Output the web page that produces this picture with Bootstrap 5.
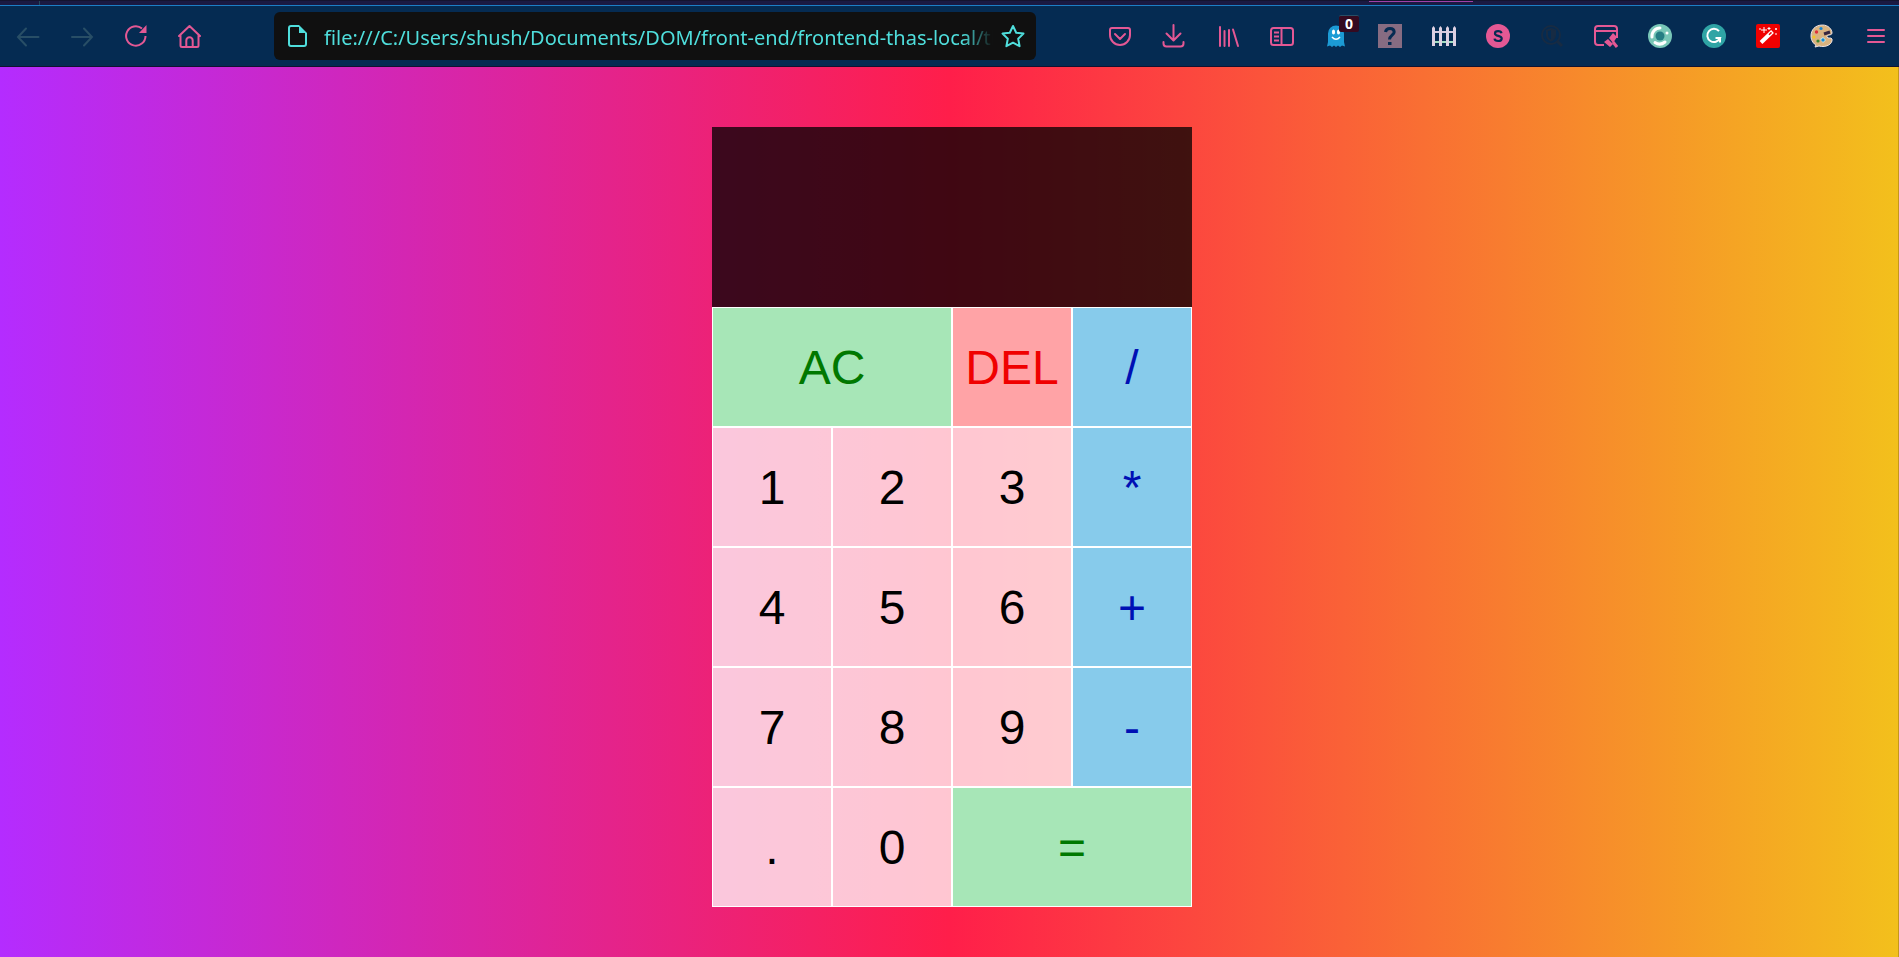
<!DOCTYPE html>
<html lang="en">
<head>
<meta charset="utf-8">
<meta name="viewport" content="width=device-width, initial-scale=1">
<title>Calculator</title>
<link href="https://cdn.jsdelivr.net/npm/bootstrap@5.3.0/dist/css/bootstrap.min.css" rel="stylesheet">
<style>
  body { font-family: "Liberation Sans", Arial, sans-serif; }

  .tab-strip { height: 6px; background: #1a1a42; border-top: 1px solid #14142f; border-bottom: 1px solid #1c7fc6; }
  .tab-edge { width: 40px; border-right: 1px solid #244a5e; }
  .tab-marker { width: 104px; height: 1px; margin-right: 426px; background: #a040a8; }

  .toolbar { height: 61px; background: #052b52; border-bottom: 1px solid #121231; }
  .tool { width: 24px; height: 24px; padding: 0; border: 0; background: none; color: #e45894; line-height: 0; flex: none; }
  .tool:disabled { color: #284e66; }
  .tool-nav { gap: 30px; padding-left: 16px; width: 274px; }
  .tool-ext { gap: 30px; padding-right: 11px; }
  .tool-badge { left: 15px; top: -9px; width: 20px; height: 17px; border-radius: 2px; background: #350a20; color: #fff; border-top: 1px solid #284e66;
    font: 700 14px/15px "Noto Sans", sans-serif; }

  .url-box { width: 762px; height: 48px; border-radius: 6px; background: #101010; color: #4fdedc; padding: 0 11px; }
  .url-box .tool { color: inherit; }
  .url-input { min-width: 0; height: 32px; border: 0; padding: 2px 0 0; margin-left: 15px; background: none; color: inherit; outline: 0;
    font-family: "Noto Sans", sans-serif; font-size: 20px; line-height: 30px;
    -webkit-mask-image: linear-gradient(to right, #000 0, #000 calc(100% - 30px), transparent 100%);
    mask-image: linear-gradient(to right, #000 0, #000 calc(100% - 30px), transparent 100%); }

  .stage { background: linear-gradient(to right, #b42cff, #ff1e4a, #f3c01c); padding: 60px 0 0 6px; border-right: 1px solid #c4981c; }
  .calc-grid { display: grid; grid-template-columns: repeat(4, 120px); grid-template-rows: 180px repeat(5, 120px); }
  .calc-display { grid-column: 1 / -1; background: rgba(0, 0, 0, .75); }
  .calc-key { border: 1px solid #fff; padding: 2px 0 0; background: rgba(255, 255, 255, .75); color: #000; font-size: 48px; line-height: 56px; }
  .key-wide { grid-column: span 2; }
  .key-go { background: #a7e6b7; color: #007800; }
  .key-del { background: #ffa3a6; color: #f00000; }
  .key-op { background: #87cbeb; color: #0010b4; }
</style>
<script src="https://cdn.jsdelivr.net/npm/bootstrap@5.3.0/dist/js/bootstrap.bundle.min.js"></script>
</head>
<body class="d-flex flex-column min-vh-100">
<header>
  <div class="tab-strip d-flex justify-content-between"><div class="tab-edge"></div><div class="tab-marker"></div></div>
  <nav class="toolbar d-flex align-items-center" aria-label="Browser toolbar">
    <div class="tool-nav d-flex flex-none">
      <button class="tool" type="button" disabled aria-label="Back"><svg width="24" height="24" fill="none" stroke="currentColor" stroke-width="2" stroke-linecap="round"><path d="M22.500 13H3M10 4.500L2 13l8 8.500"/></svg></button>
      <button class="tool" type="button" disabled aria-label="Forward"><svg width="24" height="24" fill="none" stroke="currentColor" stroke-width="2" stroke-linecap="round"><path d="M2 13H22M14 4.500l8 8.500-8 8.500"/></svg></button>
      <button class="tool" type="button" aria-label="Reload"><svg width="24" height="24" fill="none" stroke="currentColor" stroke-width="2"><path d="M21.500 12a9.700 9.700 0 1 1-3.500-7.500"/><path d="M22.500 1v8H15z" fill="currentColor" stroke="none"/></svg></button>
      <button class="tool" type="button" aria-label="Home"><svg width="24" height="24" fill="none" stroke="currentColor" stroke-width="2" stroke-linecap="round" stroke-linejoin="round"><path d="M1 12L11.500 2 22 12M2.500 11v10.500q0 1.500 1.500 1.500h15q1.500 0 1.500-1.500V11M8.300 23v-6.500a3.200 3.200 0 0 1 6.400 0V23"/></svg></button>
    </div>
    <div class="url-box d-flex align-items-center">
      <svg class="flex-shrink-0" width="24" height="24" fill="none" stroke="currentColor" stroke-width="2"><path d="M14 2H6Q4 2 4 4v16q0 2 2 2h13q2 0 2-2V9"/><path d="M14 1l8 8h-8z" fill="currentColor" stroke="none"/></svg>
      <input class="url-input flex-grow-1" type="text" aria-label="Address" value="file:///C:/Users/shush/Documents/DOM/front-end/frontend-thas-local/th">
      <button class="tool ms-2" type="button" aria-label="Bookmark"><svg width="24" height="24" fill="none" stroke="currentColor" stroke-width="2" stroke-linejoin="round"><path d="M12 2l3.200 6.700 7.300.9-5.300 5.200 1.400 7.400L12 18.700l-6.600 3.500 1.400-7.400L1.500 9.600l7.300-.9z"/></svg></button>
    </div>
    <div class="tool-ext d-flex ms-auto">
      <button class="tool" type="button" aria-label="Pocket"><svg width="24" height="24" fill="none" stroke="currentColor" stroke-width="2" stroke-linecap="round" stroke-linejoin="round"><path d="M4 4h16q2 0 2 2v5a10 10 0 0 1-20 0V6q0-2 2-2zM7 10l5 5 5-5"/></svg></button>
      <button class="tool" type="button" aria-label="Downloads"><svg width="24" height="24" fill="none" stroke="currentColor" stroke-width="2" stroke-linecap="round" stroke-linejoin="round"><path d="M11.500 1v15M4.500 9.500l7 7 7-7M1.500 18v1.500q0 3 3 3h14q3 0 3-3V18"/></svg></button>
      <button class="tool" type="button" aria-label="Library"><svg width="24" height="24" fill="none" stroke="currentColor" stroke-width="2" stroke-linecap="round"><path d="M4 3v19M8.500 7v15M13 6v16M17 5.500L22 22"/></svg></button>
      <button class="tool" type="button" aria-label="Sidebar"><svg width="24" height="24" fill="none" stroke="currentColor" stroke-width="2"><rect x="1" y="4" width="22" height="17" rx="2.500"/><path d="M11.500 4v17M4 8.500h5M4 12.500h5M4 16.500h5"/></svg></button>
      <button class="tool position-relative" type="button" aria-label="Ghostery, 0 trackers"><svg width="24" height="24"><path d="M4 18V9.500a8 8 0 0 1 16 0V18l1 4.500-3-1-2 1.500-2-1.500-2 1.500-2-1.500-2 1.500-2-1.500-3 1z" fill="#1c9bd5"/><ellipse cx="9.500" cy="8" rx="1.600" ry="2.600" fill="#fff"/><ellipse cx="14.500" cy="8" rx="1.600" ry="2.600" fill="#fff"/><path d="M8 13q4 4.500 8 0" fill="none" stroke="#fff" stroke-width="1.500"/></svg><span class="tool-badge position-absolute text-center">0</span></button>
      <button class="tool" type="button" aria-label="Help"><svg width="24" height="24"><path d="M0 0h24v24H0z" fill="#876c82"/><path d="M7.500 8Q8 4.500 12 4.500t4.200 3.500c0 3-4.700 3.500-4.700 7.500" fill="none" stroke="#052b52" stroke-width="3"/><path d="M10 18h3.500v3H10z" fill="#052b52"/></svg></button>
      <button class="tool" type="button" aria-label="Fence"><svg width="24" height="24"><path d="M1 8h22" stroke="#d5c8dc" stroke-width="2"/><path d="M1 18h22" stroke="#a0dcc0" stroke-width="2"/><path d="M0 22V4l1.500-2L3 4v18zM7 22V4l1.500-2L10 4v18zM14 22V4l1.500-2L17 4v18zM21 22V4l1.500-2L24 4v18z" fill="#ddd0e2"/></svg></button>
      <button class="tool" type="button" aria-label="Stylus"><svg width="24" height="24"><circle cx="12" cy="12" r="12" fill="#e45894"/><path d="M15.500 9.300C15 6.500 9 6.500 9 9.400c0 3.200 6.700 1.700 6.700 5 0 3.400-6.700 3.400-7.200.2" fill="none" stroke="#052b52" stroke-width="2.200"/></svg></button>
      <button class="tool" type="button" aria-label="Privacy search"><svg width="24" height="24" fill="none" stroke="#172b43" stroke-width="2"><circle cx="11" cy="11" r="9"/><path d="M17.500 17.500l4.500 4.500" stroke-width="3"/><path d="M11 5l4 1.500V11q0 3.500-4 5.500-4-2-4-5.500V6.500z"/><path d="M11 5v11.500q4-2 4-5.500V6.500z" fill="#172b43" stroke="none"/></svg></button>
      <button class="tool" type="button" aria-label="Page editor"><svg width="24" height="24" fill="none" stroke="currentColor" stroke-width="2"><path d="M10 21H4q-3 0-3-3V5q0-3 3-3h16q3 0 3 3v9M1 7h22"/><path d="M10 18l4-3 5 5-3 3zM15 14l4-5 4 4-4 6z" fill="currentColor" stroke="none"/><path d="M19 18l4 5" stroke-width="3"/></svg></button>
      <button class="tool" type="button" aria-label="Ring"><svg width="24" height="24" fill="none"><circle cx="12" cy="12" r="12" fill="#78c6b7"/><path d="M4 13a8 8 0 0 1 8-9M7 18.500q5 3.500 10-.5" stroke="#fff" stroke-width="3" stroke-linecap="round"/><circle cx="12" cy="12" r="4.500" fill="#267e84"/><circle cx="19" cy="9" r="1.500" fill="#fff"/></svg></button>
      <button class="tool" type="button" aria-label="Grammarly"><svg width="24" height="24"><circle cx="12" cy="12" r="12" fill="#2fa4a5"/><path d="M17 7.200A6.600 6.600 0 1 0 18 14h-4.500M18 18.500V14" fill="none" stroke="#fff" stroke-width="2"/></svg></button>
      <button class="tool" type="button" aria-label="Magic wand"><svg width="24" height="24"><rect width="24" height="24" rx="2" fill="#f00000"/><path d="M5 18.500L16.500 7.500" stroke="#fff" stroke-width="4"/><path d="M13 10.800l2.500-2.400" stroke="#f00000" stroke-width="1.500"/><path d="M8 3v6M5 6h6M13 3v3M11.500 4.500h3M4 4v2M20 4v2M19 5h2M20 9v2" stroke="#fff"/></svg></button>
      <button class="tool" type="button" aria-label="Palette"><svg width="24" height="24"><path d="M12.500 1C5 1 1 6 1 12c0 5 3 8 5 9l-1 2 4-1c7 2 14-2 13-7-1-2-4 0-5-2-1-3 5-1 5-4 0-4-4-8-9.500-8z" fill="#d9b380" stroke="#eee4e6"/><circle cx="11" cy="4.500" r="1.600" fill="#1687d5"/><circle cx="6.500" cy="8" r="1.700" fill="#e0303a"/><circle cx="4" cy="13" r="1.500" fill="#f6c51d"/><circle cx="8" cy="17" r="1.600" fill="#38852f"/><path d="M10 15l3-2 3 3-3 3z" fill="#bfe2ed"/><path d="M11 16l2-2 2 2-2 2z" fill="#168bd0"/><path d="M14 10l6-2" stroke="#352640" stroke-width="3"/></svg></button>
      <button class="tool" type="button" aria-label="Menu"><svg width="24" height="24" fill="none" stroke="currentColor" stroke-width="2" stroke-linecap="round"><path d="M4 6h16M4 12h16M4 18h16"/></svg></button>
    </div>
  </nav>
</header>
<main class="stage flex-grow-1">
  <div class="calc-grid justify-content-center">
    <output class="calc-display" aria-label="Result"></output>
    <button class="calc-key key-wide key-go" type="button">AC</button>
    <button class="calc-key key-del" type="button">DEL</button>
    <button class="calc-key key-op" type="button">/</button>
    <button class="calc-key" type="button">1</button>
    <button class="calc-key" type="button">2</button>
    <button class="calc-key" type="button">3</button>
    <button class="calc-key key-op" type="button">*</button>
    <button class="calc-key" type="button">4</button>
    <button class="calc-key" type="button">5</button>
    <button class="calc-key" type="button">6</button>
    <button class="calc-key key-op" type="button">+</button>
    <button class="calc-key" type="button">7</button>
    <button class="calc-key" type="button">8</button>
    <button class="calc-key" type="button">9</button>
    <button class="calc-key key-op" type="button">-</button>
    <button class="calc-key" type="button">.</button>
    <button class="calc-key" type="button">0</button>
    <button class="calc-key key-wide key-go" type="button">=</button>
  </div>
</main>
</body>
</html>
